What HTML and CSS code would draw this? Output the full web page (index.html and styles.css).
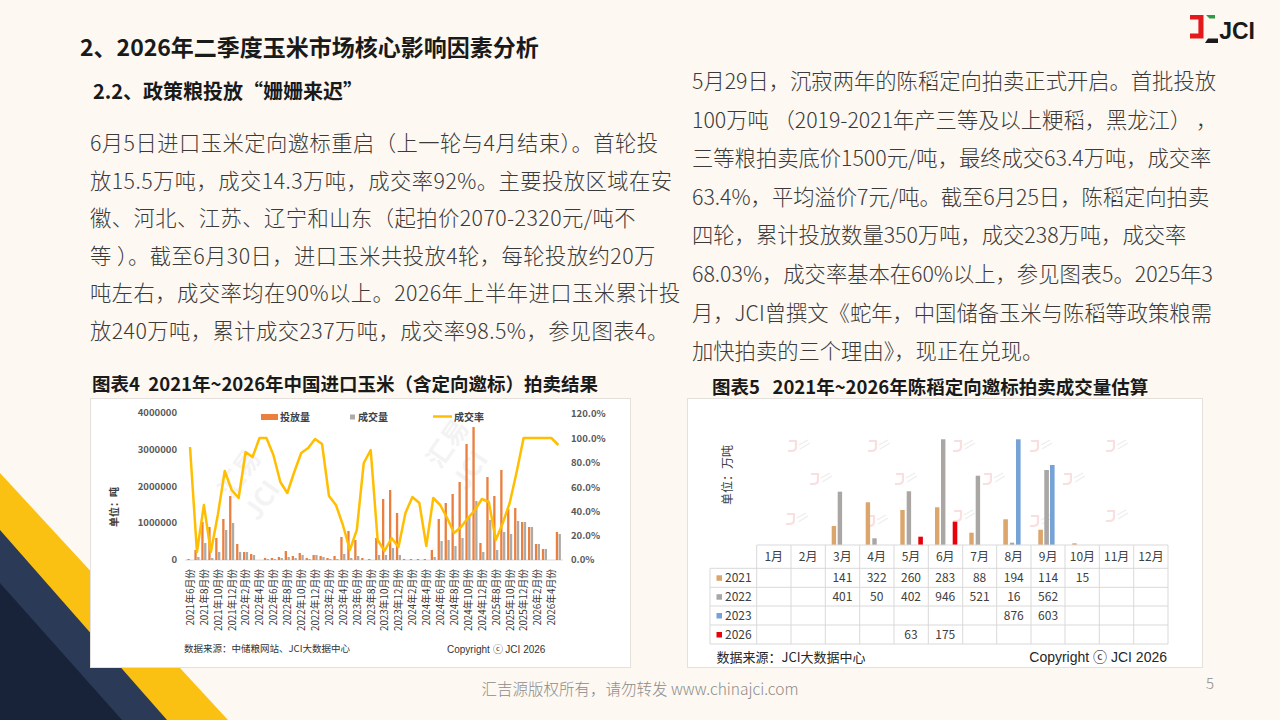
FILE: index.html
```html
<!DOCTYPE html>
<html lang="zh-CN">
<head>
<meta charset="utf-8">
<title>2026年二季度玉米市场核心影响因素分析</title>
<link rel="stylesheet" href="styles.css">
</head>
<body>
<div class="page">
  <svg class="deco" viewBox="0 470 230 250" width="230" height="250" aria-hidden="true">
    <polygon class="deco-yellow" points="0,473 228,720 0,720"/>
    <polygon class="deco-navy" points="0,530 167,720 0,720"/>
    <polygon class="deco-dark" points="0,583 122,720 0,720"/>
  </svg>

  <header class="header">
    <h1 class="title">2、2026年二季度玉米市场核心影响因素分析</h1>
    <div class="logo">
      <svg class="logo-mark" viewBox="1186 14 30 30" width="30" height="30" aria-hidden="true">
        <path class="lm-red" d="M1187 15 H1200.5 V38.5 H1187 V33.6 H1195.4 V19.6 H1187 Z"/>
        <polygon class="lm-green" points="1203,15 1212,15 1212,18.6 1206.5,18.6"/>
        <polygon class="lm-black" points="1202,43 1205,38.4 1215,38.4 1215,43"/>
      </svg>
      <span class="logo-text">JCI</span>
    </div>
  </header>

  <main class="main">
    <section class="col">
      <h2 class="subtitle">2.2、政策粮投放“姗姗来迟”</h2>
      <p class="para para-left">
        <span>6月5日进口玉米定向邀标重启（上一轮与4月结束）。首轮投</span>
        <span>放15.5万吨，成交14.3万吨，成交率92%。主要投放区域在安</span>
        <span>徽、河北、江苏、辽宁和山东（起拍价2070-2320元/吨不</span>
        <span>等 ）。截至6月30日，进口玉米共投放4轮，每轮投放约20万</span>
        <span>吨左右，成交率均在90%以上。2026年上半年进口玉米累计投</span>
        <span>放240万吨，累计成交237万吨，成交率98.5%，参见图表4。</span>
      </p>
      <div class="caption caption-left">图表4  2021年~2026年中国进口玉米（含定向邀标）拍卖结果</div>
      <div class="chart-box chart4">
        <svg viewBox="91 399 539 268" width="539" height="268">
          <!-- watermarks -->
          <text class="wm4" transform="translate(232,500) rotate(-55)">汇易</text>
          <text class="wm4" transform="translate(258,522) rotate(-55)">JCI</text>
          <text class="wm4" transform="translate(440,470) rotate(-55)">汇易</text>
          <text class="wm4" transform="translate(466,492) rotate(-55)">JCI</text>

          <!-- axes labels -->
          <text class="ax" x="177" y="413" text-anchor="end" dy="0.35em">4000000</text>
          <text class="ax" x="177" y="450" text-anchor="end" dy="0.35em">3000000</text>
          <text class="ax" x="177" y="487" text-anchor="end" dy="0.35em">2000000</text>
          <text class="ax" x="177" y="523" text-anchor="end" dy="0.35em">1000000</text>
          <text class="ax" x="177" y="560" text-anchor="end" dy="0.35em">0</text>

          <text class="ax" x="571" y="414" dy="0.35em">120.0%</text>
          <text class="ax" x="571" y="438.5" dy="0.35em">100.0%</text>
          <text class="ax" x="571" y="463" dy="0.35em">80.0%</text>
          <text class="ax" x="571" y="487.5" dy="0.35em">60.0%</text>
          <text class="ax" x="571" y="511.5" dy="0.35em">40.0%</text>
          <text class="ax" x="571" y="536" dy="0.35em">20.0%</text>
          <text class="ax" x="571" y="560" dy="0.35em">0.0%</text>

          <text class="yt" transform="translate(118,507) rotate(-90)" text-anchor="middle">单位：吨</text>

          <!-- legend -->
          <rect class="b-or" x="261" y="414" width="17" height="6"/>
          <text class="lg" x="280" y="417" dy="0.35em">投放量</text>
          <rect class="b-gr" x="350" y="414.5" width="5" height="5"/>
          <text class="lg" x="358" y="417" dy="0.35em">成交量</text>
          <line class="l-ye" x1="433" y1="416.5" x2="452" y2="416.5"/>
          <text class="lg" x="454" y="417" dy="0.35em">成交率</text>

          <line class="axis" x1="185" y1="560" x2="563" y2="560"/>

          <!-- bars: orange -->
          <g class="b-or">
            <rect x="187.4" y="559" width="2.3" height="1"/>
            <rect x="194.4" y="550" width="2.3" height="10"/>
            <rect x="201.3" y="522" width="2.3" height="38"/>
            <rect x="208.3" y="527" width="2.3" height="33"/>
            <rect x="215.2" y="538" width="2.3" height="22"/>
            <rect x="222.2" y="519" width="2.3" height="41"/>
            <rect x="229.1" y="496" width="2.3" height="64"/>
            <rect x="236.1" y="544" width="2.3" height="16"/>
            <rect x="243.0" y="552" width="2.3" height="8"/>
            <rect x="250.0" y="554" width="2.3" height="6"/>
            <rect x="263.9" y="558" width="2.3" height="2"/>
            <rect x="270.8" y="558" width="2.3" height="2"/>
            <rect x="277.8" y="557" width="2.3" height="3"/>
            <rect x="284.7" y="551" width="2.3" height="9"/>
            <rect x="291.7" y="556" width="2.3" height="4"/>
            <rect x="298.6" y="553" width="2.3" height="7"/>
            <rect x="305.6" y="558" width="2.3" height="2"/>
            <rect x="312.5" y="555" width="2.3" height="5"/>
            <rect x="319.5" y="556" width="2.3" height="4"/>
            <rect x="326.4" y="558" width="2.3" height="2"/>
            <rect x="333.4" y="556" width="2.3" height="4"/>
            <rect x="340.3" y="537" width="2.3" height="23"/>
            <rect x="347.3" y="531" width="2.3" height="29"/>
            <rect x="354.2" y="540" width="2.3" height="20"/>
            <rect x="361.2" y="558" width="2.3" height="2"/>
            <rect x="368.1" y="559" width="2.3" height="1"/>
            <rect x="375.1" y="538" width="2.3" height="22"/>
            <rect x="382.0" y="499" width="2.3" height="61"/>
            <rect x="389.0" y="490" width="2.3" height="70"/>
            <rect x="395.9" y="513" width="2.3" height="47"/>
            <rect x="402.9" y="559" width="2.3" height="1"/>
            <rect x="409.8" y="559" width="2.3" height="1"/>
            <rect x="416.8" y="559" width="2.3" height="1"/>
            <rect x="423.7" y="559" width="2.3" height="1"/>
            <rect x="430.7" y="550" width="2.3" height="10"/>
            <rect x="437.6" y="519" width="2.3" height="41"/>
            <rect x="444.6" y="503" width="2.3" height="57"/>
            <rect x="451.5" y="494" width="2.3" height="66"/>
            <rect x="458.5" y="482" width="2.3" height="78"/>
            <rect x="465.4" y="444" width="2.3" height="116"/>
            <rect x="472.4" y="427" width="2.3" height="133"/>
            <rect x="479.3" y="543" width="2.3" height="17"/>
            <rect x="486.3" y="477" width="2.3" height="83"/>
            <rect x="493.2" y="496" width="2.3" height="64"/>
            <rect x="500.2" y="470" width="2.3" height="90"/>
            <rect x="507.1" y="509" width="2.3" height="51"/>
            <rect x="514.1" y="508" width="2.3" height="52"/>
            <rect x="521.0" y="522" width="2.3" height="38"/>
            <rect x="528.0" y="527" width="2.3" height="33"/>
            <rect x="534.9" y="544" width="2.3" height="16"/>
            <rect x="541.9" y="549" width="2.3" height="11"/>
            <rect x="555.8" y="532" width="2.3" height="28"/>
          </g>
          <!-- bars: grey -->
          <g class="b-gr">
            <rect x="197.2" y="557" width="2.3" height="3"/>
            <rect x="204.1" y="543" width="2.3" height="17"/>
            <rect x="211.1" y="558" width="2.3" height="2"/>
            <rect x="218.0" y="552" width="2.3" height="8"/>
            <rect x="225.0" y="530" width="2.3" height="30"/>
            <rect x="231.9" y="523" width="2.3" height="37"/>
            <rect x="238.9" y="552" width="2.3" height="8"/>
            <rect x="245.8" y="552" width="2.3" height="8"/>
            <rect x="252.8" y="555" width="2.3" height="5"/>
            <rect x="266.7" y="559" width="2.3" height="1"/>
            <rect x="273.6" y="559" width="2.3" height="1"/>
            <rect x="280.6" y="558" width="2.3" height="2"/>
            <rect x="287.5" y="557" width="2.3" height="3"/>
            <rect x="294.5" y="558" width="2.3" height="2"/>
            <rect x="301.4" y="555" width="2.3" height="5"/>
            <rect x="308.4" y="559" width="2.3" height="1"/>
            <rect x="315.3" y="555" width="2.3" height="5"/>
            <rect x="322.3" y="557" width="2.3" height="3"/>
            <rect x="329.2" y="559" width="2.3" height="1"/>
            <rect x="336.2" y="559" width="2.3" height="1"/>
            <rect x="343.1" y="554" width="2.3" height="6"/>
            <rect x="350.1" y="558" width="2.3" height="2"/>
            <rect x="357.0" y="556" width="2.3" height="4"/>
            <rect x="377.9" y="555" width="2.3" height="5"/>
            <rect x="384.8" y="555" width="2.3" height="5"/>
            <rect x="391.8" y="548" width="2.3" height="12"/>
            <rect x="398.7" y="555" width="2.3" height="5"/>
            <rect x="433.5" y="557" width="2.3" height="3"/>
            <rect x="440.4" y="541" width="2.3" height="19"/>
            <rect x="447.4" y="540" width="2.3" height="20"/>
            <rect x="454.3" y="546" width="2.3" height="14"/>
            <rect x="461.3" y="538" width="2.3" height="22"/>
            <rect x="468.2" y="516" width="2.3" height="44"/>
            <rect x="475.2" y="501" width="2.3" height="59"/>
            <rect x="482.1" y="552" width="2.3" height="8"/>
            <rect x="489.1" y="520" width="2.3" height="40"/>
            <rect x="496.0" y="550" width="2.3" height="10"/>
            <rect x="503.0" y="532" width="2.3" height="28"/>
            <rect x="509.9" y="534" width="2.3" height="26"/>
            <rect x="516.9" y="521" width="2.3" height="39"/>
            <rect x="523.8" y="522" width="2.3" height="38"/>
            <rect x="530.8" y="527" width="2.3" height="33"/>
            <rect x="537.7" y="544" width="2.3" height="16"/>
            <rect x="544.7" y="549" width="2.3" height="11"/>
            <rect x="558.6" y="534" width="2.3" height="26"/>
          </g>

          <polyline class="l-ye" points="190,447 196.95,552 203.9,505 210.85,552 217.8,515 224.75,471 231.7,490 238.65,498 245.6,452 252.55,457 259.5,438 266.45,438 273.4,455 280.35,482 287.3,493 294.25,472 301.2,453 308.15,448 315.1,439 322.05,444 329,496 335.95,505 342.9,525 349.85,550 356.8,530 363.75,463 370.7,450 377.65,540 384.6,551 391.55,538 398.5,547 405.45,513 412.4,497 419.35,503 426.3,546 433.25,498 440.2,505 447.15,518 454.1,533 461.05,527 468,518 474.95,510 481.9,499 488.85,502 495.8,540 502.75,523 509.7,503 516.65,472 523.6,438 530.55,438 537.5,438 544.45,438 551.4,438 558.35,445"/>

          <!-- x labels -->
          <g class="xl" text-anchor="end">
            <text transform="translate(193.8,569) rotate(-90)">2021年6月份</text>
            <text transform="translate(207.7,569) rotate(-90)">2021年8月份</text>
            <text transform="translate(221.6,569) rotate(-90)">2021年10月份</text>
            <text transform="translate(235.5,569) rotate(-90)">2021年12月份</text>
            <text transform="translate(249.4,569) rotate(-90)">2022年2月份</text>
            <text transform="translate(263.3,569) rotate(-90)">2022年4月份</text>
            <text transform="translate(277.2,569) rotate(-90)">2022年6月份</text>
            <text transform="translate(291.1,569) rotate(-90)">2022年8月份</text>
            <text transform="translate(305.0,569) rotate(-90)">2022年10月份</text>
            <text transform="translate(318.9,569) rotate(-90)">2022年12月份</text>
            <text transform="translate(332.8,569) rotate(-90)">2023年2月份</text>
            <text transform="translate(346.7,569) rotate(-90)">2023年4月份</text>
            <text transform="translate(360.6,569) rotate(-90)">2023年6月份</text>
            <text transform="translate(374.5,569) rotate(-90)">2023年8月份</text>
            <text transform="translate(388.4,569) rotate(-90)">2023年10月份</text>
            <text transform="translate(402.3,569) rotate(-90)">2023年12月份</text>
            <text transform="translate(416.2,569) rotate(-90)">2024年2月份</text>
            <text transform="translate(430.1,569) rotate(-90)">2024年4月份</text>
            <text transform="translate(444.0,569) rotate(-90)">2024年6月份</text>
            <text transform="translate(457.9,569) rotate(-90)">2024年8月份</text>
            <text transform="translate(471.8,569) rotate(-90)">2024年10月份</text>
            <text transform="translate(485.7,569) rotate(-90)">2024年12月份</text>
            <text transform="translate(499.6,569) rotate(-90)">2025年8月份</text>
            <text transform="translate(513.5,569) rotate(-90)">2025年10月份</text>
            <text transform="translate(527.4,569) rotate(-90)">2025年12月份</text>
            <text transform="translate(541.3,569) rotate(-90)">2026年2月份</text>
            <text transform="translate(555.2,569) rotate(-90)">2026年4月份</text>
          </g>

          <text class="src" x="184" y="649" dy="0.35em">数据来源：中储粮网站、JCI大数据中心</text>
          <text class="cp" x="447" y="649" dy="0.35em">Copyright ⓒ JCI 2026</text>
        </svg>
      </div>
    </section>

    <section class="col">
      <p class="para para-right">
        <span>5月29日，沉寂两年的陈稻定向拍卖正式开启。首批投放</span>
        <span>100万吨 （2019-2021年产三等及以上粳稻，黑龙江） ，</span>
        <span>三等粮拍卖底价1500元/吨，最终成交63.4万吨，成交率</span>
        <span>63.4%，平均溢价7元/吨。截至6月25日，陈稻定向拍卖</span>
        <span>四轮，累计投放数量350万吨，成交238万吨，成交率</span>
        <span>68.03%，成交率基本在60%以上，参见图表5。2025年3</span>
        <span>月，JCI曾撰文《蛇年，中国储备玉米与陈稻等政策粮需</span>
        <span>加快拍卖的三个理由》，现正在兑现。</span>
      </p>
      <div class="caption caption-right">图表5   2021年~2026年陈稻定向邀标拍卖成交量估算</div>
      <div class="chart-box chart5">
        <svg viewBox="688 399 514 268" width="514" height="268">
          <defs>
            <symbol id="wm" viewBox="0 0 24 14" width="24" height="14">
              <path class="wm-j" d="M1 2 H8 V8 Q8 12 3 12 H0"/>
              <path class="wm-t" d="M11 6 L20 1 M12 10 L22 4"/>
            </symbol>
          </defs>
          <use href="#wm" x="788" y="439"/>
          <use href="#wm" x="868" y="439"/>
          <use href="#wm" x="953" y="439"/>
          <use href="#wm" x="1030" y="439"/>
          <use href="#wm" x="1106" y="439"/>
          <use href="#wm" x="810" y="472"/>
          <use href="#wm" x="895" y="472"/>
          <use href="#wm" x="983" y="472"/>
          <use href="#wm" x="1063" y="472"/>
          <use href="#wm" x="786" y="512"/>
          <use href="#wm" x="866" y="514"/>
          <use href="#wm" x="953" y="509"/>
          <use href="#wm" x="1030" y="514"/>
          <use href="#wm" x="1106" y="509"/>

          <text class="yt5" transform="translate(732,475) rotate(-90)" text-anchor="middle">单位：万吨</text>

          <!-- bars -->
          <rect class="c21" x="831.7" y="526" width="4.4" height="19"/>
          <rect class="c22" x="837.7" y="491.7" width="4.4" height="53.3"/>
          <rect class="c21" x="865.7" y="502.3" width="4.4" height="42.7"/>
          <rect class="c22" x="872.3" y="538.3" width="4.4" height="6.7"/>
          <rect class="c21" x="900.3" y="510" width="4.4" height="35"/>
          <rect class="c22" x="906.7" y="491.3" width="4.4" height="53.7"/>
          <rect class="c26" x="918.3" y="536.7" width="4.6" height="8.3"/>
          <rect class="c21" x="935" y="507.3" width="4.4" height="37.7"/>
          <rect class="c22" x="941" y="439.3" width="4.4" height="105.7"/>
          <rect class="c26" x="952.7" y="521.7" width="4.6" height="23.3"/>
          <rect class="c21" x="969.3" y="532.7" width="4.4" height="12.3"/>
          <rect class="c22" x="975.7" y="475.7" width="4.4" height="69.3"/>
          <rect class="c21" x="1003.3" y="519.3" width="4.6" height="25.7"/>
          <rect class="c22" x="1010" y="542.7" width="4.2" height="2.3"/>
          <rect class="c23" x="1016" y="439.3" width="4.6" height="105.7"/>
          <rect class="c21" x="1038.3" y="529.7" width="4.6" height="15.3"/>
          <rect class="c22" x="1044.3" y="470" width="4.6" height="75"/>
          <rect class="c23" x="1050" y="465" width="4.6" height="80"/>
          <rect class="c21" x="1072.3" y="543.3" width="4.4" height="1.7"/>

          <!-- table grid -->
          <g class="grid">
            <line x1="756.7" y1="545" x2="1168" y2="545"/>
            <line x1="710" y1="568.3" x2="1168" y2="568.3"/>
            <line x1="710" y1="587.3" x2="1168" y2="587.3"/>
            <line x1="710" y1="606" x2="1168" y2="606"/>
            <line x1="710" y1="625" x2="1168" y2="625"/>
            <line x1="710" y1="644" x2="1168" y2="644"/>
            <line x1="710" y1="568.3" x2="710" y2="644"/>
            <line x1="756.7" y1="545" x2="756.7" y2="644"/>
            <line x1="791" y1="545" x2="791" y2="644"/>
            <line x1="825.3" y1="545" x2="825.3" y2="644"/>
            <line x1="859.7" y1="545" x2="859.7" y2="644"/>
            <line x1="894" y1="545" x2="894" y2="644"/>
            <line x1="928.3" y1="545" x2="928.3" y2="644"/>
            <line x1="962.7" y1="545" x2="962.7" y2="644"/>
            <line x1="996.7" y1="545" x2="996.7" y2="644"/>
            <line x1="1031" y1="545" x2="1031" y2="644"/>
            <line x1="1065" y1="545" x2="1065" y2="644"/>
            <line x1="1099.3" y1="545" x2="1099.3" y2="644"/>
            <line x1="1133.7" y1="545" x2="1133.7" y2="644"/>
            <line x1="1168" y1="545" x2="1168" y2="644"/>
          </g>

          <g class="t5" text-anchor="middle">
            <text x="773.8" y="556.7" dy="0.35em">1月</text>
            <text x="808.1" y="556.7" dy="0.35em">2月</text>
            <text x="842.4" y="556.7" dy="0.35em">3月</text>
            <text x="876.7" y="556.7" dy="0.35em">4月</text>
            <text x="911.0" y="556.7" dy="0.35em">5月</text>
            <text x="945.3" y="556.7" dy="0.35em">6月</text>
            <text x="979.6" y="556.7" dy="0.35em">7月</text>
            <text x="1013.8" y="556.7" dy="0.35em">8月</text>
            <text x="1048.1" y="556.7" dy="0.35em">9月</text>
            <text x="1082.4" y="556.7" dy="0.35em">10月</text>
            <text x="1116.7" y="556.7" dy="0.35em">11月</text>
            <text x="1151.0" y="556.7" dy="0.35em">12月</text>

            <text x="842.4" y="577.8" dy="0.35em">141</text>
            <text x="876.7" y="577.8" dy="0.35em">322</text>
            <text x="911.0" y="577.8" dy="0.35em">260</text>
            <text x="945.3" y="577.8" dy="0.35em">283</text>
            <text x="979.6" y="577.8" dy="0.35em">88</text>
            <text x="1013.8" y="577.8" dy="0.35em">194</text>
            <text x="1048.1" y="577.8" dy="0.35em">114</text>
            <text x="1082.4" y="577.8" dy="0.35em">15</text>

            <text x="842.4" y="596.7" dy="0.35em">401</text>
            <text x="876.7" y="596.7" dy="0.35em">50</text>
            <text x="911.0" y="596.7" dy="0.35em">402</text>
            <text x="945.3" y="596.7" dy="0.35em">946</text>
            <text x="979.6" y="596.7" dy="0.35em">521</text>
            <text x="1013.8" y="596.7" dy="0.35em">16</text>
            <text x="1048.1" y="596.7" dy="0.35em">562</text>

            <text x="1013.8" y="615.5" dy="0.35em">876</text>
            <text x="1048.1" y="615.5" dy="0.35em">603</text>

            <text x="911.0" y="634.5" dy="0.35em">63</text>
            <text x="945.3" y="634.5" dy="0.35em">175</text>
          </g>

          <rect class="c21" x="716.5" y="575.3" width="5.5" height="5.5"/>
          <text class="t5" x="725" y="577.8" dy="0.35em">2021</text>
          <rect class="c22" x="716.5" y="594.2" width="5.5" height="5.5"/>
          <text class="t5" x="725" y="596.7" dy="0.35em">2022</text>
          <rect class="c23" x="716.5" y="613" width="5.5" height="5.5"/>
          <text class="t5" x="725" y="615.5" dy="0.35em">2023</text>
          <rect class="c26" x="716.5" y="632" width="5.5" height="5.5"/>
          <text class="t5" x="725" y="634.5" dy="0.35em">2026</text>

          <text class="src5" x="716.5" y="657" dy="0.35em">数据来源：JCI大数据中心</text>
          <text class="cp5" x="1167" y="657" dy="0.35em" text-anchor="end">Copyright ⓒ JCI 2026</text>
        </svg>
      </div>
    </section>
  </main>

  <footer class="footer">
    <span class="copy">汇吉源版权所有，请勿转发 www.chinajci.com</span>
    <span class="pagenum">5</span>
  </footer>
</div>
</body>
</html>
```

FILE: styles.css
```css
html, body {
  margin: 0;
  padding: 0;
  background: #fdf8f1;
}

.page {
  width: 1280px;
  height: 720px;
  position: relative;
  overflow: hidden;
  background: #fdf8f1;
  font-family: "Noto Sans CJK SC", "Noto Sans", sans-serif;
  color: #3a3a3a;
}

/* bottom-left decorative stripes */
.deco {
  position: absolute;
  left: 0;
  bottom: 0;
  z-index: 0;
  display: block;
}
.deco-yellow { fill: #fbc112; }
.deco-navy { fill: #2a3a57; }
.deco-dark { fill: #18233a; }

/* header */
.header {
  position: relative;
  z-index: 1;
  height: 61px;
  display: flex;
  justify-content: space-between;
  align-items: flex-start;
  padding: 0 25px 0 80px;
}
.title {
  margin: 31px 0 0;
  font-size: 23px;
  line-height: 30px;
  font-weight: 700;
  color: #1a1a1a;
  white-space: nowrap;
}
.logo {
  margin-top: 14px;
  display: flex;
  align-items: flex-start;
}
.logo-mark { display: block; }
.lm-red { fill: #e3191b; }
.lm-green { fill: #2f9a43; }
.lm-black { fill: #1a1a1a; }
.logo-text {
  margin-top: 2px;
  font-family: "Liberation Sans", Arial, sans-serif;
  font-weight: 700;
  font-size: 23px;
  line-height: 30px;
  color: #1a1a1a;
}

/* main two-column area */
.main {
  position: relative;
  z-index: 1;
  height: 607px;
  display: grid;
  grid-template-columns: 575px 527px;
  column-gap: 22px;
  padding-left: 90px;
}
.col {
  display: flex;
  flex-direction: column;
  align-items: flex-start;
}
.subtitle {
  margin: 15px 0 0 3px;
  font-size: 20px;
  line-height: 30px;
  font-weight: 700;
  color: #1a1a1a;
  white-space: nowrap;
}
.para {
  margin: 0;
  font-size: 21.3px;
  font-weight: 300;
  color: #3a3a3a;
}
.para span {
  display: block;
  white-space: pre;
}
.para-left {
  margin-top: 17px;
  line-height: 37.6px;
  letter-spacing: 0.45px;
}
.para-right {
  margin-left: 5px;
  line-height: 38.6px;
}
.caption {
  font-size: 18.5px;
  line-height: 24px;
  font-weight: 700;
  color: #1a1a1a;
  white-space: pre;
}
.caption-left { margin: 22px 0 0 2px; }
.caption-right { margin: 4px 0 0 25px; }

.chart-box {
  background: #ffffff;
  border: 1px solid #e4e0db;
  box-sizing: border-box;
  height: 270px;
}
.chart-box svg { display: block; }
.chart4 { width: 541px; margin-top: 3px; }
.chart5 { width: 516px; margin-top: 0; }

/* chart 4 */
.chart4 text { font-family: "Noto Sans CJK SC", "Noto Sans", sans-serif; }
.ax { font-size: 9.5px; font-weight: 700; fill: #595959; }
.yt { font-size: 10px; font-weight: 700; fill: #404040; }
.lg { font-size: 10px; font-weight: 700; fill: #404040; }
.xl { font-size: 9.8px; fill: #333333; }
.src { font-size: 9.5px; fill: #333333; }
.chart4 .cp { font-family: "Liberation Sans", Arial, sans-serif; font-size: 10px; fill: #333333; }
.wm4 { font-size: 26px; font-weight: 700; fill: #000000; opacity: 0.045; }
.b-or { fill: #ea7f3e; }
.b-gr { fill: #aeaaa6; }
.axis { stroke: #d9d9d9; stroke-width: 1; }
.l-ye { fill: none; stroke: #ffbf00; stroke-width: 2.5; stroke-linejoin: round; }

/* chart 5 */
.chart5 text { font-family: "Noto Sans CJK SC", "Noto Sans", sans-serif; }
.t5 { font-size: 12px; fill: #404040; }
.yt5 { font-size: 12px; fill: #404040; }
.src5 { font-size: 13px; fill: #262626; }
.chart5 .cp5 { font-family: "Liberation Sans", Arial, sans-serif; font-size: 14px; fill: #262626; }
.grid line { stroke: #d9d9d9; stroke-width: 1; }
.c21 { fill: #dba56c; }
.c22 { fill: #a9a6a4; }
.c23 { fill: #77a2d8; }
.c26 { fill: #e8000b; }
.wm-j { fill: none; stroke: #f2b9b9; stroke-width: 2.2; opacity: 0.45; }
.wm-t { fill: none; stroke: #d8d8d8; stroke-width: 1.2; opacity: 0.45; }

/* footer */
.footer {
  position: relative;
  z-index: 1;
  height: 52px;
  display: grid;
  grid-template-columns: 1fr auto 1fr;
}
.copy {
  grid-column: 2;
  padding-top: 10px;
  font-size: 15.5px;
  line-height: 20px;
  font-weight: 300;
  color: #8c8c8c;
  white-space: nowrap;
}
.pagenum {
  grid-column: 3;
  justify-self: end;
  margin-right: 66px;
  padding-top: 5px;
  font-size: 15px;
  line-height: 20px;
  font-weight: 300;
  color: #8c8c8c;
}
```
